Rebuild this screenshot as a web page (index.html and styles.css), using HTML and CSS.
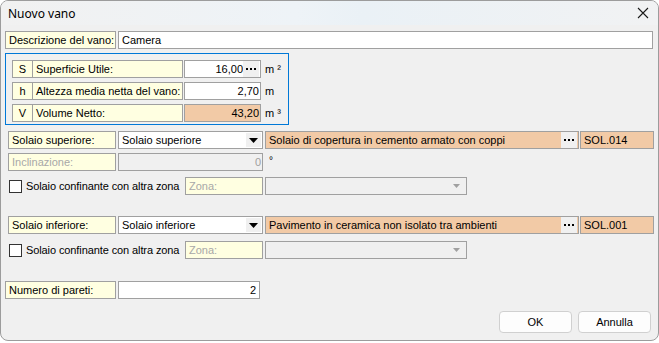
FILE: index.html
```html
<!DOCTYPE html>
<html lang="it">
<head>
    <meta charset="UTF-8">
    <title>Nuovo vano</title>
    <link rel="stylesheet" href="styles.css">
</head>
<body>
    <div class="window">
        <div class="titlebar">
            <span class="title">Nuovo vano</span>
            <svg class="close" width="12" height="12" viewBox="0 0 12 12">
                <path d="M1 1 L11 11 M11 1 L1 11" stroke="#1a1a1a" stroke-width="1.1" fill="none"/>
            </svg>
        </div>
        <div class="content">
            <div class="row">
                <div class="field label w-desc">Descrizione del vano:</div>
                <div class="field input w-descval">Camera</div>
            </div>

            <div class="group">
                <div class="row">
                    <div class="field label sym">S</div>
                    <div class="field label glabel">Superficie Utile:</div>
                    <div class="field input gval">
                        <span class="grow num">16,00</span>
                        <span class="dots"><svg width="10" height="2"><rect x="0" y="0" width="2" height="2"/><rect x="4" y="0" width="2" height="2"/><rect x="8" y="0" width="2" height="2"/></svg></span>
                    </div>
                    <span class="unit">m ²</span>
                </div>
                <div class="row gap">
                    <div class="field label sym">h</div>
                    <div class="field label glabel">Altezza media netta del vano:</div>
                    <div class="field input gval num">2,70</div>
                    <span class="unit">m</span>
                </div>
                <div class="row gap">
                    <div class="field label sym">V</div>
                    <div class="field label glabel">Volume Netto:</div>
                    <div class="field orange gval num">43,20</div>
                    <span class="unit">m ³</span>
                </div>
            </div>

            <div class="row indent mt-6">
                <div class="field label w-sol">Solaio superiore:</div>
                <div class="field input combo">
                    <span class="grow">Solaio superiore</span>
                    <span class="arrow"><svg width="9" height="5"><path d="M0 0 H9 L4.5 5 Z" fill="#000"/></svg></span>
                </div>
                <div class="field orange w-strat">
                    <span class="grow">Solaio di copertura in cemento armato con coppi</span>
                    <span class="dots"><svg width="10" height="2"><rect x="0" y="0" width="2" height="2"/><rect x="4" y="0" width="2" height="2"/><rect x="8" y="0" width="2" height="2"/></svg></span>
                </div>
                <div class="field orange w-code">SOL.014</div>
            </div>

            <div class="row indent mt-4">
                <div class="field label disabled w-sol">Inclinazione:</div>
                <div class="field off combo num">0</div>
                <span class="degree">°</span>
            </div>

            <div class="row indent mt-6">
                <span class="check"></span>
                <span class="check-text">Solaio confinante con altra zona</span>
                <div class="field label disabled w-zona">Zona:</div>
                <div class="field off w-zcombo">
                    <span class="grow"></span>
                    <span class="arrow-off"><svg width="7" height="4"><path d="M0 0 H7 L3.5 4 Z" fill="#a0a0a0"/></svg></span>
                </div>
            </div>

            <div class="row indent mt-21">
                <div class="field label w-sol">Solaio inferiore:</div>
                <div class="field input combo">
                    <span class="grow">Solaio inferiore</span>
                    <span class="arrow"><svg width="9" height="5"><path d="M0 0 H9 L4.5 5 Z" fill="#000"/></svg></span>
                </div>
                <div class="field orange w-strat">
                    <span class="grow">Pavimento in ceramica non isolato tra ambienti</span>
                    <span class="dots"><svg width="10" height="2"><rect x="0" y="0" width="2" height="2"/><rect x="4" y="0" width="2" height="2"/><rect x="8" y="0" width="2" height="2"/></svg></span>
                </div>
                <div class="field orange w-code">SOL.001</div>
            </div>

            <div class="row indent mt-7">
                <span class="check"></span>
                <span class="check-text">Solaio confinante con altra zona</span>
                <div class="field label disabled w-zona">Zona:</div>
                <div class="field off w-zcombo">
                    <span class="grow"></span>
                    <span class="arrow-off"><svg width="7" height="4"><path d="M0 0 H7 L3.5 4 Z" fill="#a0a0a0"/></svg></span>
                </div>
            </div>

            <div class="row mt-22">
                <div class="field label w-desc">Numero di pareti:</div>
                <div class="field input w-npar num">2</div>
            </div>

            <div class="buttons">
                <button class="btn">OK</button>
                <button class="btn">Annulla</button>
            </div>
        </div>
    </div>
</body>
</html>
```

FILE: styles.css
```css
body {
    margin: 0;
    padding: 0;
    background-color: #ffffff;
    font-family: "Liberation Sans", Arial, sans-serif;
    font-size: 11px;
    color: #000;
}

.window {
    width: 659px;
    height: 341px;
    box-sizing: border-box;
    border: 1px solid #9c9c9c;
    border-radius: 8px;
    background-color: #f0f0f0;
    overflow: hidden;
}

.titlebar {
    height: 24px;
    display: flex;
    align-items: center;
    justify-content: space-between;
    padding: 0 9px 0 7px;
    background: linear-gradient(90deg, #f1f1f1 0%, #eef3f7 45%, #eaf1f6 55%, #f1f2f3 100%);
}

.title {
    font-family: "Noto Sans", "Open Sans", sans-serif;
    font-size: 12px;
    color: #000;
}

.content {
    padding: 6px 4px 0 4px;
}

.row {
    display: flex;
    align-items: center;
}

.row > * {
    flex-shrink: 0;
}

.indent {
    margin-left: 3px;
}

.gap {
    margin-top: 4px;
}

.mt-4 { margin-top: 4px; }
.mt-6 { margin-top: 6px; }
.mt-7 { margin-top: 7px; }
.mt-21 { margin-top: 21px; }
.mt-22 { margin-top: 22px; }

.field {
    height: 18px;
    box-sizing: border-box;
    border: 1px solid #a0a0a0;
    line-height: 16px;
    padding: 0 3px;
    white-space: nowrap;
    overflow: hidden;
    display: flex;
    align-items: center;
}

.label {
    background-color: #ffffe1;
}

.input {
    background-color: #ffffff;
}

.orange {
    background-color: #f2caa6;
}

.off {
    background-color: #f0f0f0;
    color: #a0a0a0;
}

.disabled {
    color: #a8a8a8;
}

.num {
    justify-content: flex-end;
    text-align: right;
}

.grow {
    flex: 1;
    overflow: hidden;
}

.w-desc { width: 111px; margin-right: 2px; }
.w-descval { width: 535px; }
.w-npar { width: 142px; }

.group {
    width: 284px;
    height: 72px;
    box-sizing: border-box;
    margin-top: 4px;
    border: 1px solid #0078d7;
    padding: 6px 0 0 6px;
}

.sym {
    width: 21px;
    justify-content: center;
    padding: 0;
}

.glabel {
    width: 150px;
    border-left: none;
    margin-right: 1px;
}

.gval {
    width: 77px;
    padding-right: 1px;
}

.unit {
    margin-left: 4px;
}

.w-sol { width: 108px; margin-right: 2px; }

.combo {
    width: 145px;
    margin-right: 2px;
    padding-right: 1px;
}

.w-strat { width: 314px; margin-right: 1px; padding-right: 1px; }
.w-code { width: 74px; }

.arrow {
    width: 15px;
    height: 14px;
    background-color: #f0f0f0;
    display: flex;
    align-items: center;
    justify-content: center;
}

.arrow-off {
    width: 15px;
    display: flex;
    align-items: center;
    justify-content: center;
}

.dots {
    width: 16px;
    height: 16px;
    background-color: #f0f0f0;
    display: flex;
    align-items: center;
    justify-content: center;
}

.dots rect {
    fill: #000;
}

.degree {
    margin-left: 4px;
    font-size: 10px;
    align-self: flex-start;
    margin-top: 2px;
}

.check {
    width: 13px;
    height: 13px;
    box-sizing: border-box;
    border: 1px solid #333;
    background-color: #fff;
    margin-left: 1px;
}

.check-text {
    width: 163px;
    padding-left: 4px;
    box-sizing: border-box;
    font-size: 11px;
    letter-spacing: -0.1px;
    white-space: nowrap;
    overflow: hidden;
}

.w-zona { width: 78px; margin-right: 2px; }
.w-zcombo { width: 202px; padding-right: 2px; }

.buttons {
    display: flex;
    justify-content: flex-end;
    gap: 6px;
    margin-top: 12px;
    padding-right: 3px;
}

.btn {
    width: 73px;
    height: 22px;
    box-sizing: border-box;
    border: 1px solid #d0d0d0;
    border-radius: 4px;
    background-color: #fdfdfd;
    font-family: "Liberation Sans", Arial, sans-serif;
    font-size: 11px;
    color: #000;
    padding: 0;
}
```
